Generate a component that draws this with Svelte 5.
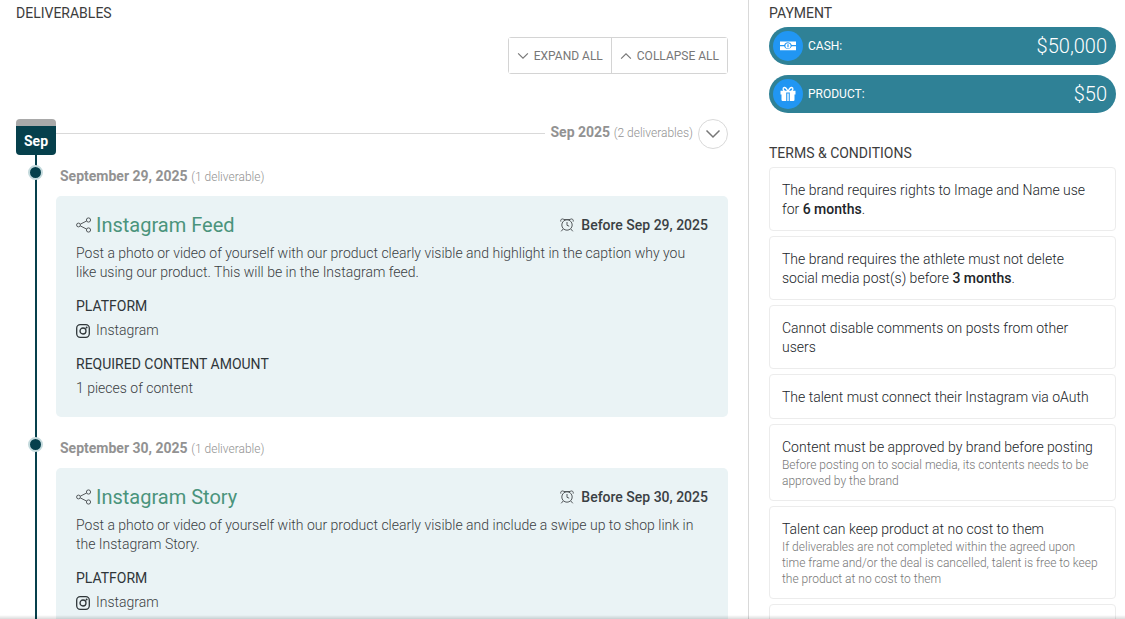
<!-- @component
The deal summary: the deliverables timeline on the left, payment and terms on the right. Each column
scrolls by itself above the modal's footer. -->
<script lang="ts">
  type Deliverable = {
    date: string;
    title: string;
    due: string;
    description: string;
    platform: string;
    amount: string;
  };

  type Term = { text: string; strong?: string; note?: string };

  const deliverables: Deliverable[] = [
    {
      date: 'September 29, 2025',
      title: 'Instagram Feed',
      due: 'Before Sep 29, 2025',
      description:
        'Post a photo or video of yourself with our product clearly visible and highlight in the caption why you like using our product. This will be in the Instagram feed.',
      platform: 'Instagram',
      amount: '1 pieces of content',
    },
    {
      date: 'September 30, 2025',
      title: 'Instagram Story',
      due: 'Before Sep 30, 2025',
      description:
        'Post a photo or video of yourself with our product clearly visible and include a swipe up to shop link in the Instagram Story.',
      platform: 'Instagram',
      amount: '1 pieces of content',
    },
  ];

  const payments = [
    { label: 'CASH:', value: '$50,000', icon: 'cash' },
    { label: 'PRODUCT:', value: '$50', icon: 'gift' },
  ];

  const terms: Term[] = [
    { text: 'The brand requires rights to Image and Name use for', strong: '6 months' },
    {
      text: 'The brand requires the athlete must not delete social media post(s) before',
      strong: '3 months',
    },
    { text: 'Cannot disable comments on posts from other users' },
    { text: 'The talent must connect their Instagram via oAuth' },
    {
      text: 'Content must be approved by brand before posting',
      note: 'Before posting on to social media, its contents needs to be approved by the brand',
    },
    {
      text: 'Talent can keep product at no cost to them',
      note: 'If deliverables are not completed within the agreed upon time frame and/or the deal is cancelled, talent is free to keep the product at no cost to them',
    },
    { text: '' },
  ];

  let open = $state(true);
</script>

{#snippet chevron(up: boolean, size: number)}
  <svg class="chevron" width={size} height={size} viewBox="0 0 16 16" aria-hidden="true">
    <path d={up ? 'M1.5 11.5 8 5l6.500 6.500' : 'M1.500 4.500 8 11l6.500-6.500'} />
  </svg>
{/snippet}

<div class="deal">
  <main class="column deliverables">
    <h2 class="heading">DELIVERABLES</h2>

    <div class="toolbar">
      <button type="button" onclick={() => (open = true)}>{@render chevron(false, 12)}EXPAND ALL</button>
      <button type="button" onclick={() => (open = false)}>{@render chevron(true, 12)}COLLAPSE ALL</button>
    </div>

    <section class="month">
      <header class="month-header">
        <div class="month-badge">Sep</div>
        <div class="month-rule"></div>
        <h3 class="month-title">Sep 2025 <small>(2 deliverables)</small></h3>
        <button class="month-toggle" type="button" aria-label="Toggle Sep 2025" aria-expanded={open} onclick={() => (open = !open)}>
          {@render chevron(false, 16)}
        </button>
      </header>

      {#if open}
        {#each deliverables as item}
          <article class="day">
            <h4 class="day-title">{item.date} <small>(1 deliverable)</small></h4>
            <div class="card">
              <div class="card-header">
                <h5 class="card-title">
                  <svg width="16" height="16" viewBox="0 0 16 16" aria-hidden="true">
                    <g fill="none" stroke="#54595c">
                      <circle cx="2.500" cy="8" r="1.900" />
                      <circle cx="12.500" cy="3" r="2.100" />
                      <circle cx="12.500" cy="13" r="2.100" />
                      <path d="M4.300 7.200 10.600 4M4.300 8.900l6.300 3.200" />
                    </g>
                  </svg>
                  {item.title}
                </h5>
                <p class="due">
                  <svg width="14" height="14" viewBox="0 0 14 14" aria-hidden="true">
                    <g fill="none" stroke="#54595c">
                      <circle cx="7" cy="7" r="5.200" />
                      <path d="M7 4v3.300l2.200.9M.8 3.600C.3 1.500 1.700.5 3.600 1.100M13.200 3.600c.5-2.100-.9-3.100-2.800-2.500M3.300 10.900 1.200 13.300M10.700 10.900l2.100 2.400M3.500 1.500h7" />
                    </g>
                  </svg>
                  {item.due}
                </p>
              </div>
              <p class="description">{item.description}</p>

              <h6 class="label">PLATFORM</h6>
              <p class="value">
                <svg width="14" height="14" viewBox="0 0 14 14" aria-hidden="true">
                  <g fill="none" stroke="#2f3639" stroke-width="1.300">
                    <rect x=".7" y=".7" width="12.600" height="12.600" rx="3.500" />
                    <circle cx="7" cy="7" r="3" />
                  </g>
                  <circle cx="10.600" cy="3.400" r="1" fill="#2f3639" />
                </svg>
                {item.platform}
              </p>

              <h6 class="label">REQUIRED CONTENT AMOUNT</h6>
              <p class="value">{item.amount}</p>
            </div>
          </article>
        {/each}
      {/if}
    </section>
  </main>

  <aside class="column summary">
    <h2 class="heading">PAYMENT</h2>
    <dl class="payments">
      {#each payments as payment}
        <div class="payment">
          <dt>
            <span class="payment-icon">
              <svg width="16" height="16" viewBox="0 0 16 16" aria-hidden="true">
                {#if payment.icon === 'cash'}
                  <path fill="#fff" d="M0 3.500h16v3.600h-4.200a4 4 0 0 0-7.600 0H0zM0 8.300h4.200a4 4 0 0 0 7.600 0H16v3.900H0z" />
                  <path fill="#fff" fill-rule="evenodd" d="M8 5.200a2.600 2.600 0 1 0 0 5.200 2.600 2.600 0 0 0 0-5.200zM7.400 6.300h1.200v3H7.400z" />
                {:else}
                  <path fill="#fff" d="M.5 4.800h15v3.700h-1v5.300a1.200 1.200 0 0 1-1.200 1.200H9.800V6.600H6.200V15H2.700a1.200 1.200 0 0 1-1.200-1.200V8.500h-1zM7.300 7.500h1.400V15H7.300z" />
                  <path fill="none" stroke="#fff" stroke-width="1.300" d="M7.700 5C6.800 2.800 5.600 1.400 4.300 1.500 2.600 1.700 2.700 4.400 4.600 4.900M8.300 5c.9-2.200 2.100-3.600 3.400-3.500 1.700.2 1.600 2.900-.3 3.400" />
                {/if}
              </svg>
            </span>
            {payment.label}
          </dt>
          <dd>{payment.value}</dd>
        </div>
      {/each}
    </dl>

    <h2 class="heading">TERMS &amp; CONDITIONS</h2>
    <ul class="terms">
      {#each terms as term}
        <li class="term">
          <p>{term.text}{#if term.strong}{' '}<strong>{term.strong}</strong>.{/if}</p>
          {#if term.note}<p class="note">{term.note}</p>{/if}
        </li>
      {/each}
    </ul>
  </aside>
</div>

<style>
  :global(body) {
    margin: 0;
    background: #fff;
  }

  .deal {
    display: grid;
    grid-template-columns: minmax(0, 1fr) 376px;
    height: 100vh;
    overflow: hidden;
    font-family: Roboto, sans-serif;
    font-size: 14px;
    font-weight: 300;
    line-height: 19px;
    color: #212529;
  }

  /* Shadow of the footer that sits under the scrolling columns. */
  .deal::after {
    content: '';
    position: fixed;
    inset: auto 0 0;
    height: 4px;
    background: linear-gradient(transparent, rgba(0, 0, 0, 0.14));
    pointer-events: none;
  }

  h2,
  h3,
  h4,
  h5,
  h6,
  p,
  dl,
  dd,
  ul {
    margin: 0;
    padding: 0;
    font-size: inherit;
    font-weight: inherit;
  }

  svg {
    flex: none;
  }

  .column {
    box-sizing: border-box;
    overflow-y: auto;
    scrollbar-width: none;
    padding-top: 3px;
  }

  .deliverables {
    display: flex;
    flex-direction: column;
    padding-right: 20px;
    padding-left: 16px;
    border-right: 1px solid #d9d9d9;
  }

  .summary {
    padding-right: 9px;
    padding-left: 20px;
  }

  .heading {
    margin-bottom: 4px;
    font-weight: 400;
    line-height: 20px;
    color: #3c3c3c;
  }

  button {
    font: inherit;
    color: #777;
    background: #fff;
    cursor: pointer;
  }

  .chevron {
    fill: none;
    stroke: #777;
    stroke-width: 1.5;
  }

  .toolbar {
    display: flex;
    align-self: flex-end;
    margin: 10px 0 45px;
    border: 1px solid #d4d4d4;
    border-radius: 3px;
  }
  .toolbar button {
    display: flex;
    align-items: center;
    gap: 5px;
    height: 35px;
    padding: 1px 8px 0;
    border: 0;
    font-size: 12px;
    font-weight: 400;
  }
  .toolbar button + button {
    border-left: 1px solid #d4d4d4;
  }

  .month {
    position: relative;
    flex: 1 0 auto;
  }
  .month::before {
    content: '';
    position: absolute;
    inset: 30px auto 0 19px;
    width: 2px;
    background: #06404c;
  }

  .month-header {
    position: relative;
    display: flex;
    align-items: flex-start;
  }

  .month-badge {
    box-sizing: border-box;
    width: 40px;
    height: 36px;
    padding-top: 6px;
    border-top: 7px solid #a9a9a9;
    border-radius: 4px;
    background: #06404c;
    color: #fff;
    font-weight: 700;
    text-align: center;
  }

  .month-rule {
    flex: 1;
    margin-top: 14px;
    border-top: 1px solid #d9d9d9;
  }

  .month-title,
  .day-title {
    font-weight: 700;
    color: #929292;
  }
  .month-title {
    margin: 4px 5px;
  }

  small {
    font-size: 12px;
    font-weight: 300;
  }

  .month-toggle {
    display: grid;
    place-items: center;
    width: 30px;
    height: 30px;
    padding: 0;
    border: 1px solid #d9d9d9;
    border-radius: 50%;
  }

  .day {
    position: relative;
    margin-left: 40px;
    padding-top: 12px;
  }
  .day + .day {
    padding-top: 22px;
  }

  .day-title {
    margin: 0 4px 9px;
  }
  /* Dot on the timeline, level with the date. */
  .day-title::before {
    content: '';
    position: absolute;
    left: -28px;
    width: 11px;
    height: 11px;
    margin-top: -2px;
    border: 2px solid #c4dadd;
    border-radius: 50%;
    background: #06404c;
  }

  .card {
    padding: 17px 20px 19px;
    border-radius: 5px;
    background: #eaf3f5;
    color: #3a4043;
  }

  .card-header {
    display: flex;
    justify-content: space-between;
    align-items: center;
    margin-bottom: 7px;
  }

  .card-title {
    display: flex;
    align-items: center;
    gap: 4px;
    font-size: 20px;
    font-weight: 400;
    line-height: 24px;
    color: #4a947c;
  }

  .due {
    display: flex;
    align-items: center;
    gap: 7px;
    font-weight: 500;
  }

  .label {
    margin-top: 15px;
    font-weight: 400;
    color: #2f3639;
  }

  .value {
    display: flex;
    align-items: center;
    gap: 6px;
    margin-top: 5px;
  }

  .payments {
    display: grid;
    gap: 10px;
    margin-bottom: 30px;
  }

  .payment {
    display: flex;
    justify-content: space-between;
    align-items: center;
    height: 38px;
    padding: 0 9px 0 4px;
    border-radius: 19px;
    background: #2f8196;
    color: #fff;
  }
  .payment dt {
    display: flex;
    align-items: center;
    gap: 5px;
    font-size: 12px;
    font-weight: 400;
  }
  .payment dd {
    font-size: 20px;
  }

  .payment-icon {
    display: grid;
    place-items: center;
    width: 30px;
    height: 30px;
    border-radius: 50%;
    background: #2196f3;
  }

  .terms {
    display: grid;
    gap: 5px;
    list-style: none;
  }

  .term {
    min-height: 19px;
    padding: 13px 14px 11px 12px;
    border: 1px solid #ececec;
    border-radius: 4px;
  }
  .term strong {
    font-weight: 500;
  }

  .note {
    font-size: 12px;
    line-height: 16px;
    color: #777;
  }
</style>
